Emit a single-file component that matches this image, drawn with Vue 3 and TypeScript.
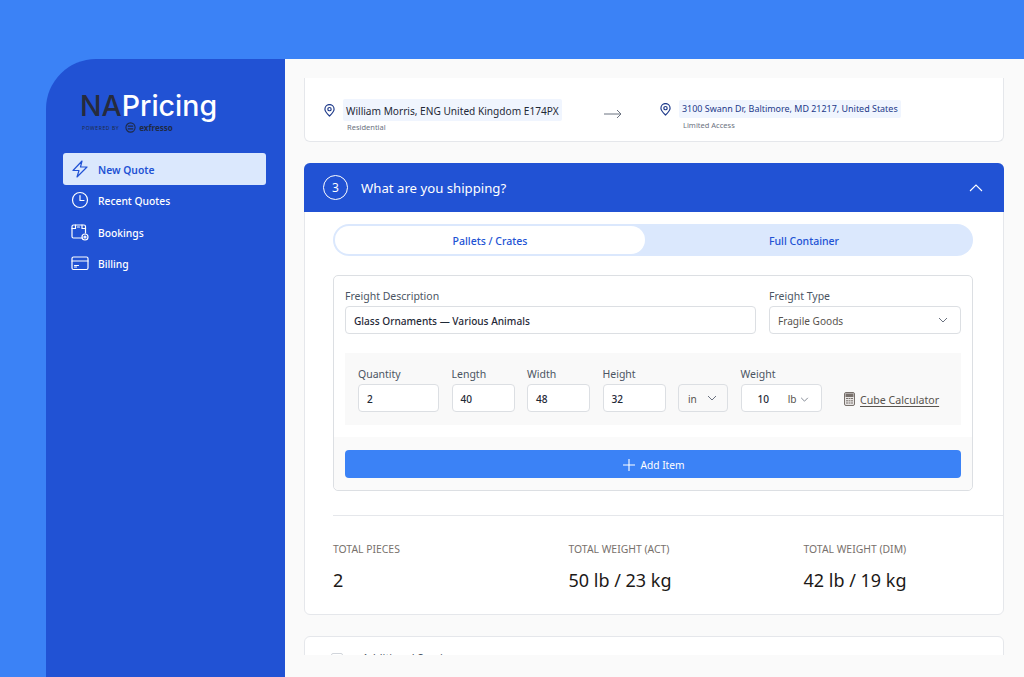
<script setup lang="ts">
const navItems = [
  { label: "New Quote", icon: "bolt", active: true },
  { label: "Recent Quotes", icon: "clock", active: false },
  { label: "Bookings", icon: "box", active: false },
  { label: "Billing", icon: "card", active: false },
];

const dimensions = [
  { label: "Quantity", value: "2", width: 81 },
  { label: "Length", value: "40", width: 63 },
  { label: "Width", value: "48", width: 63 },
  { label: "Height", value: "32", width: 63 },
];

const totals = [
  { label: "TOTAL PIECES", value: "2" },
  { label: "TOTAL WEIGHT (ACT)", value: "50 lb / 23 kg" },
  { label: "TOTAL WEIGHT (DIM)", value: "42 lb / 19 kg" },
];
</script>

<template>
  <div class="page">
    <div class="shell">
      <aside class="sidebar">
        <div class="logo">
          <div class="logo-name"><span class="logo-dark">NA</span>Pricing</div>
          <div class="logo-sub">
            <span class="powered">POWERED BY</span>
            <svg class="logo-mark" viewBox="0 0 12 12" width="11" height="11" fill="none" stroke="#1f2a44" stroke-width="1.2">
              <circle cx="6" cy="6" r="5" />
              <path d="M3 4.500h6M3 7.500h6" />
            </svg>
            <span class="logo-brand">exfresso</span>
          </div>
        </div>
        <nav class="nav">
          <div v-for="item in navItems" :key="item.label" class="nav-item" :class="{ active: item.active }">
            <svg class="nav-icon" viewBox="0 0 18 18" width="18" height="18" fill="none" stroke="currentColor" stroke-width="1.2" stroke-linejoin="round" stroke-linecap="round">
              <path v-if="item.icon === 'bolt'" d="M11 1 2 10.500h6L6 17l10-10h-6.500z" />
              <template v-else-if="item.icon === 'clock'">
                <circle cx="9" cy="9" r="7.500" />
                <path d="M9 4.500V9.500h4" />
              </template>
              <template v-else-if="item.icon === 'box'">
                <path d="M11 15H2.500a1.500 1.500 0 0 1-1.500-1.500V3.500A1.500 1.500 0 0 1 2.500 2h10.500a1.500 1.500 0 0 1 1.500 1.500V10" />
                <path d="M1 5.500h3.500V2M11 2v3.500h3.500M6.500 4h2" />
                <circle cx="14" cy="14" r="3" />
                <circle cx="14" cy="14" r="1" />
              </template>
              <template v-else>
                <rect x="1" y="3" width="16" height="12.500" rx="1.500" />
                <path d="M1 7h16M3.500 11.500h4M3.500 13h2" />
              </template>
            </svg>
            <span>{{ item.label }}</span>
          </div>
        </nav>
      </aside>

      <main class="main">
        <div class="scroll">
          <section class="card route">
            <div class="stop stop-from">
              <svg class="pin" viewBox="0 0 12 14" width="11" height="13" fill="none" stroke="#1e3a8a" stroke-width="1.300">
                <path d="M6 13C3 10 1 7.900 1 5.500a5 5 0 0 1 10 0C11 7.900 9 10 6 13z" />
                <circle cx="6" cy="5.500" r="1.800" />
              </svg>
              <div>
                <div class="addr addr-large">William Morris, ENG United Kingdom E174PX</div>
                <div class="addr-note">Residential</div>
              </div>
            </div>
            <svg class="arrow" viewBox="0 0 18 10" width="18" height="10" fill="none" stroke="#6b7280" stroke-width="1">
              <path d="M0 5h17M13 1l4 4-4 4" />
            </svg>
            <div class="stop stop-to">
              <svg class="pin" viewBox="0 0 12 14" width="11" height="13" fill="none" stroke="#1e3a8a" stroke-width="1.300">
                <path d="M6 13C3 10 1 7.900 1 5.500a5 5 0 0 1 10 0C11 7.900 9 10 6 13z" />
                <circle cx="6" cy="5.500" r="1.800" />
              </svg>
              <div>
                <div class="addr addr-small">3100 Swann Dr, Baltimore, MD 21217, United States</div>
                <div class="addr-note">Limited Access</div>
              </div>
            </div>
          </section>

          <section class="card shipping">
            <header class="ship-head">
              <span class="step">3</span>
              <h2>What are you shipping?</h2>
              <svg class="collapse" viewBox="0 0 14 8" width="14" height="8" fill="none" stroke="#fff" stroke-width="1.100">
                <path d="M1 7l6-6 6 6" />
              </svg>
            </header>

            <div class="ship-body">
              <div class="tabs">
                <div class="tab tab-on">Pallets / Crates</div>
                <div class="tab tab-off">Full Container</div>
              </div>

              <div class="freight">
                <div class="freight-top">
                  <div class="field grow">
                    <label>Freight Description</label>
                    <div class="input strong">Glass Ornaments — Various Animals</div>
                  </div>
                  <div class="field type">
                    <label>Freight Type</label>
                    <div class="input select">
                      Fragile Goods
                      <svg viewBox="0 0 10 6" width="10" height="6" fill="none" stroke="#6b7280" stroke-width="1"><path d="M1 1l4 4 4-4" /></svg>
                    </div>
                  </div>
                </div>

                <div class="dims">
                  <div v-for="d in dimensions" :key="d.label" class="field" :style="{ width: d.width + 'px' }">
                    <label>{{ d.label }}</label>
                    <div class="input strong">{{ d.value }}</div>
                  </div>
                  <div class="field unit">
                    <div class="input select muted-bg">
                      in
                      <svg viewBox="0 0 10 6" width="10" height="6" fill="none" stroke="#6b7280" stroke-width="1"><path d="M1 1l4 4 4-4" /></svg>
                    </div>
                  </div>
                  <div class="field weight">
                    <label>Weight</label>
                    <div class="input weight-input">
                      <span class="strong">10</span>
                      <span class="lb">lb
                        <svg viewBox="0 0 10 6" width="9" height="5" fill="none" stroke="#6b7280" stroke-width="1"><path d="M1 1l4 4 4-4" /></svg>
                      </span>
                    </div>
                  </div>
                  <div class="cube">
                    <svg viewBox="0 0 11 14" width="11" height="14" fill="none" stroke="#78716c" stroke-width="1">
                      <rect x="0.500" y="0.500" width="10" height="13" rx="1.500" fill="#e7e5e4" />
                      <rect x="2" y="2" width="7" height="2.500" fill="#78716c" />
                      <path d="M2 6.500h2M4.500 6.500h2M7 6.500h2M2 8.800h2M4.500 8.800h2M7 8.800h2M2 11h2M4.500 11h2M7 11h2" />
                    </svg>
                    <span>Cube Calculator</span>
                  </div>
                </div>

                <div class="add-wrap">
                  <button class="add" type="button">
                    <svg viewBox="0 0 12 12" width="12" height="12" fill="none" stroke="#fff" stroke-width="1.100"><path d="M6 0v12M0 6h12" /></svg>
                    Add Item
                  </button>
                </div>
              </div>
            </div>

            <div class="totals">
              <div v-for="t in totals" :key="t.label" class="total">
                <div class="total-label">{{ t.label }}</div>
                <div class="total-value">{{ t.value }}</div>
              </div>
            </div>
          </section>

          <section class="card extra">
            <span class="check" />
            <span class="extra-text">Additional Services</span>
          </section>
        </div>
      </main>
    </div>
  </div>
</template>

<style>
html,
body {
  margin: 0;
  background: #3b82f6;
}
</style>

<style scoped>
.page {
  height: 677px;
  box-sizing: border-box;
  padding: 59px 0 0 46px;
  overflow: hidden;
  font-family: "Noto Sans", "Liberation Sans", sans-serif;
}

.shell {
  display: flex;
  height: 618px;
}

.sidebar {
  width: 239px;
  flex-shrink: 0;
  box-sizing: border-box;
  padding: 30px 19px 0 17px;
  background: #2152d4;
  border-top-left-radius: 50px;
}

.logo {
  padding-left: 17px;
  height: 64px;
}

.logo-name {
  font-family: Inter, "Noto Sans", sans-serif;
  font-size: 28.500px;
  font-weight: 500;
  line-height: 34px;
  color: #fff;
}

.logo-dark {
  color: #262b3d;
}

.logo-sub {
  display: flex;
  align-items: center;
  gap: 3px;
  margin-top: -1px;
  padding-left: 2px;
  color: #1f2a44;
}

.powered {
  font-size: 5px;
  letter-spacing: 0.6px;
  margin-right: 3px;
}

.logo-brand {
  font-size: 8px;
  font-weight: 700;
}

.nav {
  display: flex;
  flex-direction: column;
}

.nav-item {
  display: flex;
  align-items: center;
  gap: 9px;
  height: 31.500px;
  padding-left: 8px;
  border-radius: 3px;
  font-size: 10.300px;
  font-weight: 500;
  color: #fff;
}

.nav-item span {
  margin-top: 2px;
}

.nav-item.active {
  background: #dbe8fd;
  color: #2152d4;
  font-weight: 600;
}

.nav-icon {
  flex-shrink: 0;
}

.main {
  flex: 1;
  min-width: 0;
  box-sizing: border-box;
  padding: 19px 20px 22px 19px;
  background: #fafafa;
}

.scroll {
  height: 100%;
  overflow: hidden;
  display: flex;
  flex-direction: column;
  gap: 21px;
}

.card {
  flex-shrink: 0;
  background: #fff;
  border: 1px solid #e5e7eb;
  border-radius: 6px;
  box-sizing: border-box;
}

.route {
  display: flex;
  align-items: flex-start;
  height: 64px;
  padding-left: 19px;
  border-top: 0;
  border-radius: 0 0 6px 6px;
}

.stop {
  display: flex;
  gap: 8px;
}

.stop-from {
  margin-top: 21px;
  width: 278px;
}

.stop-to {
  margin-top: 22px;
  margin-left: 38px;
}

.pin {
  margin-top: 3px;
  flex-shrink: 0;
}

.stop-from .pin {
  margin-top: 5px;
}

.arrow {
  margin: 31px 0 0 2px;
}

.addr {
  width: fit-content;
  background: #f0f5fe;
  border-radius: 2px;
  padding: 0 3px;
  white-space: nowrap;
}

.addr-large {
  height: 22px;
  line-height: 24px;
  font-size: 10.150px;
  color: #1f2937;
}

.addr-small {
  height: 18px;
  line-height: 18px;
  font-size: 8.950px;
  color: #1e3a8a;
}

.addr-note {
  margin-left: 4px;
  font-size: 7.500px;
  line-height: 12px;
  color: #6b7280;
}

.stop-to .addr-note {
  margin-top: 1px;
}

.shipping {
  height: 452px;
}

.ship-head {
  display: flex;
  align-items: center;
  height: 49px;
  margin: -1px -1px 0;
  padding: 0 21px 0 19px;
  background: #2152d4;
  border-radius: 6px 6px 0 0;
  color: #fff;
}

.step {
  display: flex;
  align-items: center;
  justify-content: center;
  width: 23px;
  height: 23px;
  border: 1px solid #fff;
  border-radius: 50%;
  font-size: 12px;
}

.ship-head h2 {
  flex: 1;
  margin: 0 0 0 13px;
  font-size: 13.200px;
  font-weight: 400;
}

.ship-body {
  padding: 12px 30px 0 28px;
}

.tabs {
  display: flex;
  box-sizing: border-box;
  height: 32px;
  padding: 2px 0 2px 2px;
  background: #dbe8fd;
  border-radius: 16px;
}

.tab {
  flex: 1;
  display: flex;
  align-items: center;
  justify-content: center;
  padding-top: 1px;
  box-sizing: border-box;
  font-size: 10.500px;
  font-weight: 500;
  color: #2152d4;
}

.tab-on {
  flex: 0 0 310px;
  background: #fff;
  border-radius: 14px;
}

.tab-off {
  padding-right: 10px;
}

.freight {
  margin-top: 19px;
  box-sizing: border-box;
  height: 216px;
  border: 1px solid #dcdfe3;
  border-radius: 5px;
  display: flex;
  flex-direction: column;
}

.freight-top {
  display: flex;
  gap: 13px;
  padding: 12px 11px 0;
}

.field {
  flex-shrink: 0;
  box-sizing: border-box;
}

.field.grow {
  flex: 1;
}

.field.type {
  width: 192px;
}

.field label {
  display: block;
  height: 18px;
  font-size: 10.500px;
  line-height: 16px;
  color: #4b5563;
}

.input {
  box-sizing: border-box;
  height: 28px;
  display: flex;
  align-items: center;
  padding: 2px 8px 0;
  border: 1px solid #dcdfe3;
  border-radius: 4px;
  background: #fff;
  font-size: 10.100px;
  color: #57534e;
}

.strong {
  color: #1f2937;
  font-weight: 500;
}

.select {
  justify-content: space-between;
  padding-right: 12px;
}

.select svg {
  margin-top: -2px;
}

.dims {
  display: flex;
  align-items: flex-end;
  gap: 12.500px;
  height: 72px;
  box-sizing: border-box;
  margin: 19px 11px 0;
  padding: 0 13px 13px;
  background: #f9f9f9;
}

.unit {
  width: 50px;
}

.muted-bg {
  background: #f9f9f9;
  padding: 2px 10px 0 9px;
}

.weight {
  width: 81px;
}

.weight-input {
  padding: 2px 12px 0 16px;
  justify-content: space-between;
}

.lb {
  display: flex;
  align-items: center;
  gap: 3px;
  font-weight: 400;
}

.cube {
  display: flex;
  align-items: center;
  gap: 5px;
  height: 28px;
  margin-left: 10px;
  padding-top: 2px;
  box-sizing: border-box;
  font-size: 10.650px;
  color: #57534e;
  white-space: nowrap;
}

.cube span {
  text-decoration: underline;
  text-underline-offset: 2px;
  margin-top: 2px;
}

.add-wrap {
  flex: 1;
  margin-top: 12px;
  padding: 13px 11px 0;
  background: #fafafa;
  border-radius: 0 0 5px 5px;
}

.add {
  display: flex;
  align-items: center;
  justify-content: center;
  gap: 5px;
  width: 100%;
  height: 28px;
  padding: 1px 0 0 2px;
  border: 0;
  border-radius: 4px;
  background: #3b82f6;
  color: #fff;
  font-family: inherit;
  font-size: 10.200px;
  font-weight: 400;
}

.totals {
  display: grid;
  grid-template-columns: 235.500px 235px 1fr;
  height: 100px;
  margin: 24px -1px 0 28px;
  padding-top: 25px;
  box-sizing: border-box;
  border-top: 1px solid #e5e7eb;
}

.total-label {
  font-size: 10.400px;
  line-height: 16px;
  color: #78716c;
}

.total-value {
  margin-top: 10px;
  font-size: 18px;
  line-height: 26px;
  color: #1c1917;
}

.extra {
  height: 60px;
  display: flex;
  align-items: flex-start;
  gap: 19px;
  padding: 16px 0 0 26px;
}

.check {
  width: 10px;
  height: 10px;
  border: 1px solid #d1d5db;
  border-radius: 2px;
}

.extra-text {
  margin-top: -2px;
  font-size: 11px;
  line-height: 14px;
  color: #4b5563;
}
</style>
